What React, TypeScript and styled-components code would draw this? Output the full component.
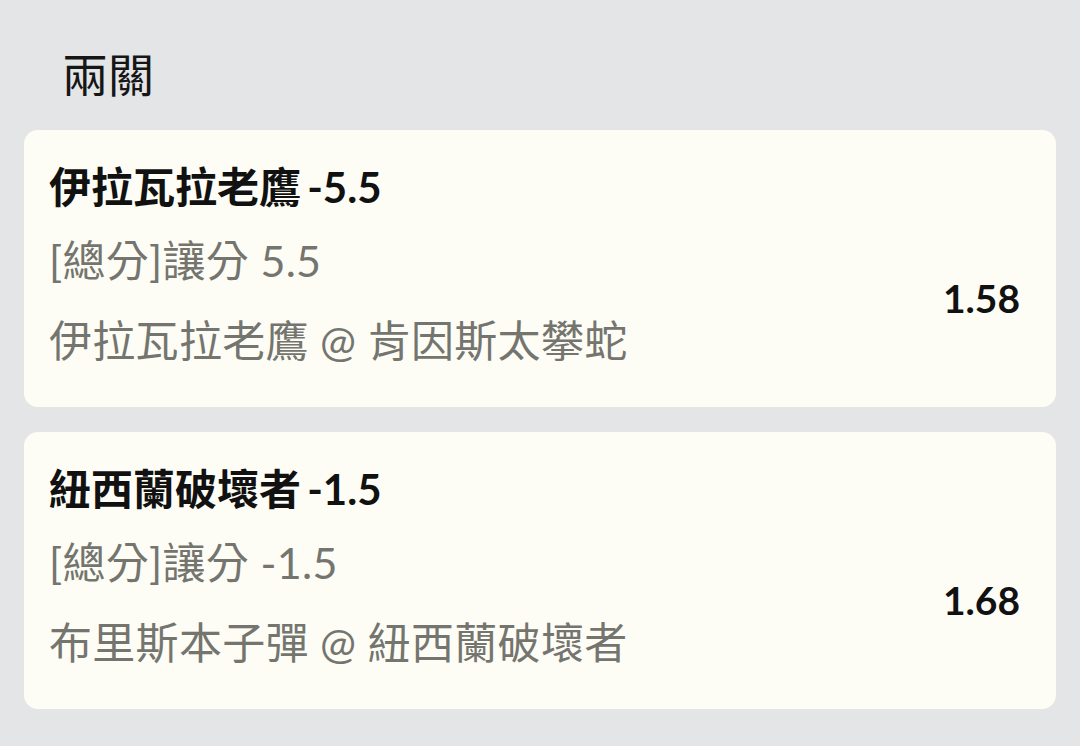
import React from "react";
import styled, { createGlobalStyle } from "styled-components";

const Global = createGlobalStyle`
  html, body { margin: 0; padding: 0; background: #e4e5e7; }
  body { font-family: Lato, "Noto Sans CJK TC", sans-serif; }
`;

const Page = styled.div`
  display: flex;
  flex-direction: column;
  padding: 44px 24px 24px 24px;
  gap: 25px;
  min-height: 746px;
  box-sizing: border-box;
`;

const Heading = styled.h1`
  margin: 0 0 0 38px;
  font-size: 46px;
  line-height: 61px;
  font-weight: 400;
  color: #161616;
`;

const Card = styled.div`
  background: #fdfdf5;
  border-radius: 14px;
  padding: 27px 36px 36px 25px;
  display: flex;
  flex-direction: column;
`;

const Title = styled.div`
  font-size: 42px;
  line-height: 60px;
  font-weight: 700;
  color: #111;
  margin-bottom: 14px;
  word-spacing: -4px;
`;

const Body = styled.div`
  display: flex;
  align-items: center;
  justify-content: space-between;
`;

const Lines = styled.div`
  display: flex;
  flex-direction: column;
  gap: 20px;
`;

const Sub = styled.div`
  font-size: 43px;
  line-height: 60px;
  letter-spacing: 0.3px;
  color: #757570;
`;

const Odds = styled.div`
  font-size: 39px;
  font-weight: 700;
  color: #111;
  margin-bottom: 6px;
`;

const bets = [
  { title: "伊拉瓦拉老鷹 -5.5", market: "[總分]讓分 5.5", match: "伊拉瓦拉老鷹 @ 肯因斯太攀蛇", odds: "1.58" },
  { title: "紐西蘭破壞者 -1.5", market: "[總分]讓分 -1.5", match: "布里斯本子彈 @ 紐西蘭破壞者", odds: "1.68" },
];

export default function App() {
  return (
    <>
      <Global />
      <Page>
        <Heading>兩關</Heading>
        {bets.map((b) => (
          <Card key={b.title}>
            <Title>{b.title}</Title>
            <Body>
              <Lines>
                <Sub>{b.market}</Sub>
                <Sub>{b.match}</Sub>
              </Lines>
              <Odds>{b.odds}</Odds>
            </Body>
          </Card>
        ))}
      </Page>
    </>
  );
}
